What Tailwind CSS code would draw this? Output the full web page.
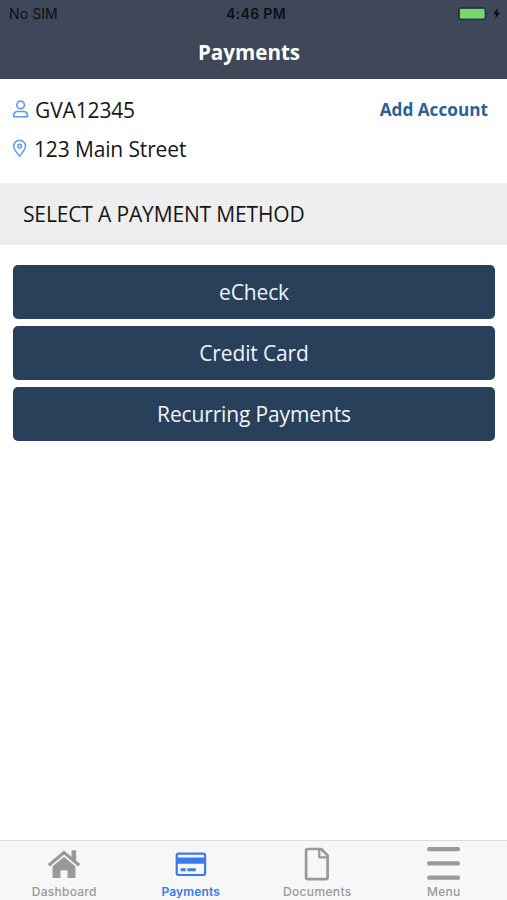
<!DOCTYPE html>
<html lang="en">
<head>
<meta charset="utf-8">
<title>Payments</title>
<script src="https://cdn.jsdelivr.net/npm/@tailwindcss/browser@4"></script>
</head>
<body class="flex h-[900px] w-[507px] flex-col overflow-hidden bg-white font-['Open_Sans','Noto_Sans',sans-serif] text-[#161616]">
  <header class="h-[79px] shrink-0 bg-[#3f4859]">
    <div class="grid h-[27px] grid-cols-3 items-center pr-[6px] pl-[9px] font-['Inter',sans-serif] text-[14px] text-[#0b1018]">
      <span class="tracking-[0.1px]">No SIM</span>
      <span class="pl-[2px] text-center font-semibold tracking-[0.35px]">4:46 PM</span>
      <span class="flex justify-end">
        <svg class="h-[14px] w-[44px]" viewBox="0 0 44 14">
          <rect x="1.5" y="0.7" width="27" height="12" rx="2.5" fill="none" stroke="#252e3c" stroke-width="1"/>
          <rect x="3" y="2" width="24.5" height="9.4" rx="1" fill="#76d86b"/>
          <path d="M30 4.9q2 1.8 0 3.6z" fill="#252e3c"/>
          <path d="M40.8 0.7 36.2 7.3h3l-1.2 5 5.3-6.8h-3.2z" fill="#0b1018"/>
        </svg>
      </span>
    </div>
    <h1 class="pr-[9px] text-center text-[20.6px] leading-[50px] font-bold text-white">Payments</h1>
  </header>
  <section class="flex h-[104px] shrink-0 flex-col pt-[12px] pr-[19px] pl-[12px] text-[21px] tracking-[-0.14px]">
    <div class="flex h-[39px] items-center">
      <svg class="-mt-[4px] mr-[6px] h-[18px] w-[17px]" viewBox="0 0 17 18" fill="none" stroke="#5b9af8" stroke-width="1.6">
        <circle cx="8.6" cy="4.9" r="3.8"/>
        <path d="M1.7 16.8v-1.2c0-2.5 1.6-4.1 4-4.1h5.8c2.4 0 4 1.6 4 4.1v1.2z" stroke-linejoin="round"/>
      </svg>
      <span>GVA12345</span>
      <a class="-mt-[2px] ml-auto text-[17.2px] font-bold tracking-normal text-[#2a6199]">Add Account</a>
    </div>
    <div class="flex h-[40px] items-center">
      <svg class="-mt-[4px] mr-[7px] h-[19px] w-[15px]" viewBox="0 0 15 19" fill="none" stroke="#5b9af8" stroke-width="1.5">
        <path d="M7.6 17.3C5 14 1.7 10.5 1.7 7.1a5.9 5.9 0 0 1 11.8 0c0 3.4-3.3 6.9-5.9 10.2z" stroke-linejoin="round"/>
        <circle cx="7.6" cy="7.1" r="1.9"/>
      </svg>
      <span>123 Main Street</span>
    </div>
  </section>
  <h2 class="flex h-[62px] shrink-0 items-center bg-[#eeeeee] pt-[2px] pl-[23px] text-[21px] tracking-[-0.15px]">SELECT A PAYMENT METHOD</h2>
  <main class="flex flex-1 flex-col gap-[7px] pt-[20px] pr-[12px] pl-[13px] text-[21px] tracking-[-0.14px] text-[#edf4fd]">
    <button class="h-[54px] rounded-[5px] bg-[#29405a] pt-[2px]">eCheck</button>
    <button class="h-[54px] rounded-[5px] bg-[#29405a] pt-[2px]">Credit Card</button>
    <button class="h-[54px] rounded-[5px] bg-[#29405a] pt-[2px]">Recurring Payments</button>
  </main>
  <nav class="grid h-[60px] shrink-0 grid-cols-4 border-t border-[#dcdcdc] bg-[#f7f7f7] pl-px font-['Inter',sans-serif] text-[12px] leading-[14px] font-medium text-[#999999]">
    <a class="flex flex-col items-center pt-[6px]">
      <svg class="h-[36px] w-[34px]" viewBox="0 0 34 36" fill="#999">
        <path d="M1.8 18.3 17 5.6l15.2 12.7" fill="none" stroke="#999" stroke-width="3.2"/>
        <path d="M24.5 3.2h4.7v12l-4.7-3.9zM5.5 19.4 17 9.8l11.5 9.6v10.3q0 1.3-1.3 1.3h-6.7v-7.8h-7V31H6.8q-1.3 0-1.3-1.3z"/>
      </svg>
      <span class="mt-[2px] tracking-[0.25px]">Dashboard</span>
    </a>
    <a class="flex flex-col items-center pt-[6px] text-[#397bed]">
      <svg class="h-[36px] w-[34px]" viewBox="0 0 34 36">
        <rect x="2.7" y="6.6" width="28.4" height="21.4" rx="2" fill="none" stroke="#397bed" stroke-width="2.2"/>
        <path d="M2.7 10.5h28v6.3h-28zM6.7 21.2h5v3h-5zM13.4 21.2h8.4v3h-8.4z" fill="#397bed"/>
      </svg>
      <span class="mt-[2px] font-semibold tracking-[0.15px]">Payments</span>
    </a>
    <a class="flex flex-col items-center pt-[6px]">
      <svg class="h-[36px] w-[34px]" viewBox="0 0 34 36" fill="none" stroke="#999" stroke-width="2.7" stroke-linejoin="round">
        <path d="M7.8 2h13.4l6.4 6.4v22.1q0 1.7-1.7 1.7H7.8q-1.7 0-1.7-1.7V3.7q0-1.7 1.7-1.7z"/>
        <path d="M19.3 2.3v8h8" stroke-width="2.3"/>
      </svg>
      <span class="mt-[2px] tracking-[0.35px]">Documents</span>
    </a>
    <a class="flex flex-col items-center pt-[6px]">
      <svg class="h-[36px] w-[34px]" viewBox="0 0 34 36" fill="#999">
        <rect x="0.3" y="0" width="32.6" height="4.2" rx="1.5"/>
        <rect x="0.3" y="14.2" width="32.6" height="4.2" rx="1.5"/>
        <rect x="0.3" y="28.4" width="32.6" height="4.4" rx="1.5"/>
      </svg>
      <span class="mt-[2px] tracking-[0.3px]">Menu</span>
    </a>
  </nav>
</body>
</html>
